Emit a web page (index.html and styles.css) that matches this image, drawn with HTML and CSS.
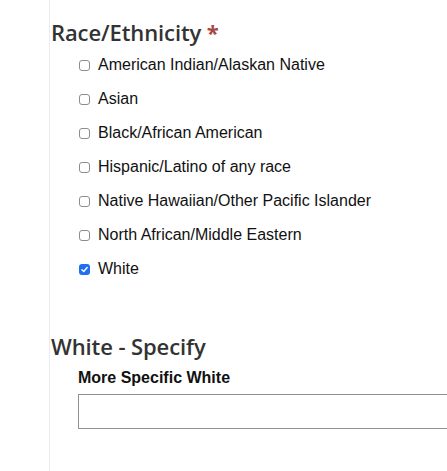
FILE: index.html
```html
<!DOCTYPE html>
<html>
<head>
<meta charset="utf-8">
<link rel="stylesheet" href="styles.css">
</head>
<body>
<div class="panel">
  <fieldset class="group">
    <h2 class="heading">Race/Ethnicity <span class="req">*</span></h2>
    <ul class="options">
      <li class="option"><span class="box"></span><span class="label">American Indian/Alaskan Native</span></li>
      <li class="option"><span class="box"></span><span class="label">Asian</span></li>
      <li class="option"><span class="box"></span><span class="label">Black/African American</span></li>
      <li class="option"><span class="box"></span><span class="label">Hispanic/Latino of any race</span></li>
      <li class="option"><span class="box"></span><span class="label">Native Hawaiian/Other Pacific Islander</span></li>
      <li class="option"><span class="box"></span><span class="label">North African/Middle Eastern</span></li>
      <li class="option"><span class="box checked"><svg viewBox="0 0 12 12" width="12" height="12"><path d="M3.2 6.3 L5.2 8.2 L8.9 3.9" fill="none" stroke="#fff" stroke-width="1.6" stroke-linecap="round" stroke-linejoin="round"/></svg></span><span class="label">White</span></li>
    </ul>
  </fieldset>
  <div class="group specify">
    <h2 class="heading">White - Specify</h2>
    <div class="field">
      <div class="field-label">More Specific White</div>
      <div class="input"></div>
    </div>
  </div>
</div>
</body>
</html>
```
FILE: styles.css
```css
html, body {
  margin: 0;
  padding: 0;
  background: #fff;
}
body {
  width: 447px;
  height: 471px;
  overflow: hidden;
}
.panel {
  margin-left: 49px;
  border-left: 1px solid #ececec;
  padding-left: 1px;
  height: 471px;
  box-sizing: border-box;
  padding-top: 17px;
  overflow: hidden;
}
.group {
  border: 0;
  margin: 0;
  padding: 0;
}
.heading {
  margin: 0;
  font-family: "Open Sans", sans-serif;
  font-weight: 600;
  font-size: 22px;
  line-height: 30px;
  color: #333;
  letter-spacing: -0.1px;
}
.req {
  color: #a94442;
  font-weight: 700;
}
.options {
  list-style: none;
  margin: 0;
  padding: 0 0 0 28px;
}
.option {
  display: flex;
  align-items: center;
  height: 34px;
  font-family: "Liberation Sans", Arial, sans-serif;
  font-size: 16px;
  color: #111;
}
.option:first-child {
  margin-top: 1px;
}
.box {
  width: 9px;
  height: 9px;
  border: 1px solid #8d8d8d;
  border-radius: 3px;
  margin-right: 8px;
  box-sizing: content-box;
  display: flex;
  align-items: center;
  justify-content: center;
}
.box.checked {
  width: 11px;
  height: 11px;
  border: 0;
  background: #1f6ff5;
}
.box.checked svg {
  display: block;
  width: 11px;
  height: 11px;
}
.specify {
  margin-top: 45px;
}
.field {
  padding-left: 27px;
}
.field-label {
  font-family: "Liberation Sans", Arial, sans-serif;
  font-weight: 700;
  font-size: 16px;
  line-height: 20px;
  color: #111;
  margin-top: 7px;
}
.input {
  margin-top: 6px;
  height: 33px;
  width: calc(100% + 40px);
  border: 1px solid #919191;
  background: #fff;
}
```
